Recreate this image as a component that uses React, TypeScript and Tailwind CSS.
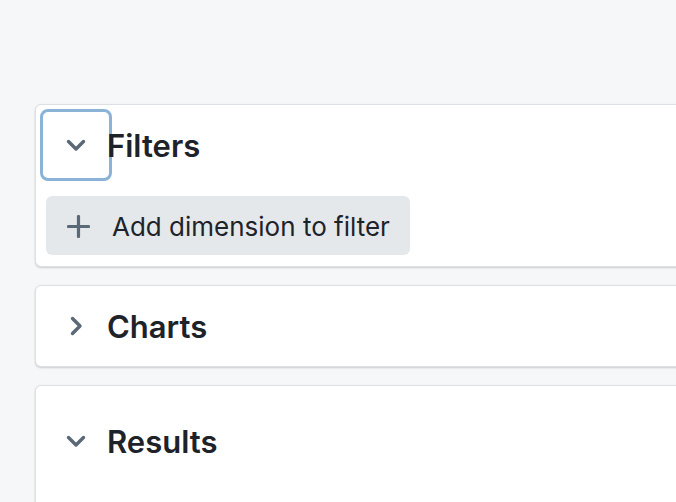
import React from 'react';

const Chevron = ({ open }: { open: boolean }) => (
  <svg
    width="20"
    height="20"
    viewBox="0 0 20 20"
    fill="none"
    stroke="#5b6876"
    strokeWidth="3.4"
    strokeLinecap="round"
    strokeLinejoin="round"
    className={open ? '' : '-rotate-90'}
  >
    <path d="M2.5 6.5l7.5 7.5 7.5-7.5" />
  </svg>
);

const PlusIcon = () => (
  <svg width="23" height="23" viewBox="0 0 23 23" fill="none" stroke="#5b6876" strokeWidth="3.2" strokeLinecap="round">
    <path d="M11.5 1.5v20M1.5 11.5h20" />
  </svg>
);

const Section = ({
  title,
  open,
  focused,
  className,
  children,
}: {
  title: string;
  open: boolean;
  focused?: boolean;
  className?: string;
  children?: React.ReactNode;
}) => (
  <section
    className={`w-[700px] bg-white border border-[#dcdfe3] rounded-[6px] shadow-[0_1px_2px_rgba(0,0,0,0.18)] pl-[7px] ${className ?? ''}`}
  >
    <div className="flex items-center">
      <button
        className={`w-[66px] h-[66px] flex items-center justify-center rounded-[5px] ${
          focused ? 'outline-[3px] outline-solid outline-[#8ab3d7]' : ''
        }`}
      >
        <Chevron open={open} />
      </button>
      <h2 className="-ml-[2px] text-[31px] font-semibold text-[#1e2329] leading-none">{title}</h2>
    </div>
    {children}
  </section>
);

export default function App() {
  return (
    <div
      className="h-[502px] overflow-hidden bg-[#f6f7f9] pl-[35px] pt-[104px] flex flex-col gap-[18px]"
      style={{ fontFamily: 'Inter, "Noto Sans", sans-serif' }}
    >
      <Section title="Filters" open focused className="pt-[7px] pb-[11px]">
        <button className="mt-[18px] ml-[3px] h-[59px] w-[364px] rounded-[6px] bg-[#e5e8eb] flex items-center pl-[21px] gap-[22px] pt-[2px] text-[26px] text-[#1e2329]">
          <PlusIcon />
          <span>Add dimension to filter</span>
        </button>
      </Section>
      <Section title="Charts" open={false} className="py-[7px]" />
      <Section title="Results" open className="pt-[22px] h-[200px] shrink-0" />
    </div>
  );
}
